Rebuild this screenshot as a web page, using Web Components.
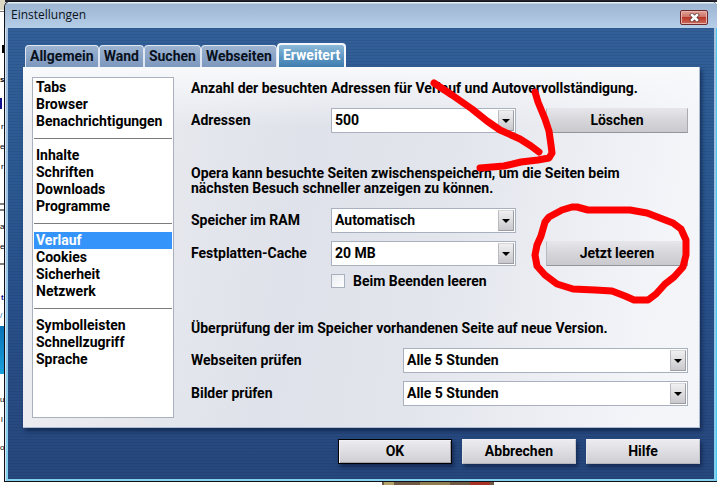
<!DOCTYPE html>
<html lang="de">
<head>
<meta charset="utf-8">
<title>Einstellungen</title>
<style>
    body {
        margin: 0;
        min-height: 100vh;
        position: relative;
        overflow: hidden;
        background: #fff;
        color: #000;
        font: bold 14px/17px Roboto, "Liberation Sans", sans-serif;
    }
</style>
</head>
<body>
<page-backdrop></page-backdrop>

<settings-window caption="Einstellungen">
    <tab-strip tabs="Allgemein,Wand,Suchen,Webseiten,Erweitert" active="Erweitert"></tab-strip>
    <settings-panel>
        <nav-list
            slot="nav"
            active="Verlauf"
            groups="Tabs,Browser,Benachrichtigungen|Inhalte,Schriften,Downloads,Programme|Verlauf,Cookies,Sicherheit,Netzwerk|Symbolleisten,Schnellzugriff,Sprache"
        ></nav-list>

        <settings-group>
            <span slot="text">Anzahl der besuchten Adressen für Verlauf und Autovervollständigung.</span>
            <select-field label="Adressen" value="500">
                <push-button>Löschen</push-button>
            </select-field>
        </settings-group>

        <settings-group>
            <span slot="text">Opera kann besuchte Seiten zwischenspeichern, um die Seiten beim<br>nächsten Besuch schneller anzeigen zu können.</span>
            <select-field label="Speicher im RAM" value="Automatisch"></select-field>
            <select-field label="Festplatten-Cache" value="20 MB">
                <push-button>Jetzt leeren</push-button>
            </select-field>
            <check-field label="Beim Beenden leeren"></check-field>
        </settings-group>

        <settings-group>
            <span slot="text">Überprüfung der im Speicher vorhandenen Seite auf neue Version.</span>
            <select-field wide label="Webseiten prüfen" value="Alle 5 Stunden"></select-field>
            <select-field wide label="Bilder prüfen" value="Alle 5 Stunden"></select-field>
        </settings-group>
    </settings-panel>

    <push-button slot="buttons" kind="default">OK</push-button>
    <push-button slot="buttons" kind="raised">Abbrechen</push-button>
    <push-button slot="buttons" kind="raised">Hilfe</push-button>
</settings-window>

<pen-marks></pen-marks>

<script>
// Sliver of the web page that shows around the window
class PageBackdrop extends HTMLElement {
    constructor() {
        super()
        this.attachShadow({ mode: 'open' })
    }

    connectedCallback() {
        this.shadowRoot.innerHTML = `
        <style>
        :host { position: absolute; inset: 0; z-index: -1; }
        svg { display: block; }
        text { font: 8px "Liberation Sans", sans-serif; }
        .bold { font-weight: bold; }
        </style>

        <svg width="100%" height="100%" aria-hidden="true">
            <defs>
                <linearGradient id="blue" x2="0" y2="1">
                    <stop offset="0" stop-color="#0872b6"/>
                    <stop offset="1" stop-color="#1aa0dc"/>
                </linearGradient>
            </defs>
            <rect width="100%" height="2" fill="#24242c"/>
            <rect width="5" height="10" fill="#dcd8c4"/>
            <rect y="11" width="5" height="1" fill="#77756a"/>
            <rect x="2" y="45" width="2" height="8"/>
            <text class="bold" x="0" y="82">s</text>
            <rect y="98" width="2" height="11" fill="#10108c"/>
            <text x="1" y="129">r</text>
            <text x="0" y="149">e</text>
            <text x="1" y="169">r</text>
            <path d="M0 204h4M0 210h4" stroke="#000"/>
            <text x="0" y="229">a</text>
            <text x="0" y="249">e</text>
            <path d="M0 264h4" stroke="#000"/>
            <text class="bold" x="1" y="300" fill="#10108c">t</text>
            <text x="0" y="318" fill="#0872b6">/</text>
            <rect y="326" width="4" height="48" fill="url(#blue)"/>
            <text x="0" y="402">u</text>
            <text x="1" y="422">l</text>
            <text x="0" y="450">o</text>
            <rect x="382" y="482" width="112" height="3" fill="#6e5a44"/>
            <rect x="384" y="482" width="10" height="3" fill="#b5a268"/>
            <rect x="420" y="482" width="30" height="3" fill="#8f7d52"/>
            <rect x="470" y="482" width="20" height="3" fill="#a53224"/>
        </svg>
        `
    }
}

class SettingsWindow extends HTMLElement {
    constructor() {
        super()
        this.attachShadow({ mode: 'open' })
    }

    connectedCallback() {
        const caption = this.getAttribute('caption')

        this.shadowRoot.innerHTML = `
        <style>
        :host {
            display: block;
            margin-left: 4px;
            padding-top: 1px;
        }
        .frame {
            border: 1px solid #101018;
            border-right: 0;
            border-radius: 6px 6px 0 0;
            background: linear-gradient(#b4c8de, #a3bddb 60px, #9cc4e6 50%, #83d0ef);
            box-shadow: inset 0 1px #e6eef6, inset 1px 0 #d4e4f2, inset -1px 0 #45c8f0;
            padding: 0 3px 2px;
        }
        header {
            display: flex;
            align-items: center;
            justify-content: space-between;
            height: 26px;
            margin: 0 -3px;
            padding: 0 9px 0 6px;
            border-radius: 5px 5px 0 0;
            background: linear-gradient(#e6eef6 1px, #9db6d2 2px, #a8c0dc 50%, #b6cfe8);
        }
        h1 {
            margin: 0;
            font: 12px/24px "Open Sans", "Noto Sans", sans-serif;
            color: #0c1420;
        }
        button {
            display: grid;
            place-items: center;
            width: 28px;
            height: 15px;
            margin-top: 4px;
            padding: 0;
            border: 1px solid #6c2a2c;
            border-radius: 2px;
            background: linear-gradient(#e3a398, #cf7468 45%, #b93a2c 50%, #cf6a5a);
            box-shadow: inset 0 0 0 1px #e8b5ac;
        }
        .body {
            padding: 17px 14px 15px 15px;
            background:
                repeating-linear-gradient(#0a143018 0 1px, transparent 1px 3px),
                linear-gradient(#325f98, #2b5a92 30%, #28508a 60%, #26477c);
        }
        footer {
            display: flex;
            justify-content: flex-end;
            gap: 10px;
            margin-top: 11px;
        }
        ::slotted(push-button) { width: 114px; }
        </style>

        <div class="frame">
            <header>
                <h1>${caption}</h1>
                <button aria-label="Schließen">
                    <svg width="11" height="9" viewBox="0 0 11 9">
                        <path d="M3 2l5 5m0-5l-5 5" stroke="#5d3534" stroke-width="4" stroke-linecap="square"/>
                        <path d="M3 2l5 5m0-5l-5 5" stroke="#fff" stroke-width="2.6" stroke-linecap="square"/>
                    </svg>
                </button>
            </header>
            <div class="body">
                <slot></slot>
                <footer><slot name="buttons"></slot></footer>
            </div>
        </div>
        `
    }
}

class TabStrip extends HTMLElement {
    constructor() {
        super()
        this.attachShadow({ mode: 'open' })
    }

    connectedCallback() {
        const active = this.getAttribute('active')
        const tabs = this.getAttribute('tabs').split(',')

        this.shadowRoot.innerHTML = `
        <style>
        :host { display: block; }
        div {
            display: flex;
            align-items: flex-end;
            height: 24px;
            padding-left: 2px;
            margin-top: -2px;
        }
        button {
            height: 22px;
            padding: 0 4px;
            border: 1px solid #dfe8f2;
            border-width: 1px 1px 0;
            border-radius: 4px 4px 0 0;
            background: linear-gradient(#9db4d0, #8aa5c8 50%, #7d98bd);
            color: #08101c;
            font: inherit;
        }
        button[aria-selected="true"] {
            height: 24px;
            padding: 0 4px 2px;
            border: 2px solid #f4f8fc;
            border-bottom: 0;
            background: linear-gradient(#8fbad8, #5f9ac6 50%, #3f7cae);
            color: #fff;
        }
        </style>

        <div role="tablist">
            ${tabs.map(tab => `<button role="tab" aria-selected="${tab === active}">${tab}</button>`).join('')}
        </div>
        `
    }
}

class SettingsPanel extends HTMLElement {
    constructor() {
        super()
        this.attachShadow({ mode: 'open' })
    }

    connectedCallback() {
        this.shadowRoot.innerHTML = `
        <style>
        :host {
            display: grid;
            grid-template-columns: 142px 1fr;
            gap: 17px;
            padding: 10px 11px 9px 9px;
            border: solid #aebccd;
            border-width: 0 1px 1px 0;
            background:
                linear-gradient(#f8f9fb, #f8f9fb00 60px),
                linear-gradient(100deg, #eeeff2, #dfe2ea 40%, #e2e5ec 60%, #f4f5f9 92%);
            box-shadow: 2px 3px 4px #0a1a3ca0;
        }
        main {
            display: flex;
            flex-direction: column;
            gap: 33px;
            padding-top: 4px;
        }
        </style>

        <slot name="nav"></slot>
        <main><slot></slot></main>
        `
    }
}

class NavList extends HTMLElement {
    constructor() {
        super()
        this.attachShadow({ mode: 'open' })
    }

    connectedCallback() {
        const active = this.getAttribute('active')
        const groups = this.getAttribute('groups').split('|')

        const item = name => `<a href="#" ${name === active ? 'aria-current="page"' : ''}>${name}</a>`

        this.shadowRoot.innerHTML = `
        <style>
        :host {
            display: block;
            box-sizing: border-box;
            min-height: 341px;
            padding: 1px;
            border: 1px solid #a9b1bf;
            background: #fff;
        }
        a {
            display: block;
            padding: 0 2px;
            color: #000;
            text-decoration: none;
        }
        a[aria-current] {
            background: #3594fa;
            color: #fff;
        }
        hr {
            height: 1px;
            margin: 8px 0;
            border: 0;
            background: #7c7c7c;
        }
        </style>

        <nav>${groups.map(group => group.split(',').map(item).join('')).join('<hr>')}</nav>
        `
    }
}

class SettingsGroup extends HTMLElement {
    constructor() {
        super()
        this.attachShadow({ mode: 'open' })
    }

    connectedCallback() {
        this.shadowRoot.innerHTML = `
        <style>
        :host { display: block; }
        p {
            margin: 0 0 12px;
            line-height: 15px;
        }
        div {
            display: flex;
            flex-direction: column;
            gap: 8px;
        }
        </style>

        <p><slot name="text"></slot></p>
        <div><slot></slot></div>
        `
    }
}

class SelectField extends HTMLElement {
    constructor() {
        super()
        this.attachShadow({ mode: 'open' })
    }

    connectedCallback() {
        const label = this.getAttribute('label')
        const value = this.getAttribute('value')

        this.shadowRoot.innerHTML = `
        <style>
        :host {
            display: grid;
            grid-template-columns: 140px 1fr 142px;
            align-items: center;
        }
        :host([wide]) { grid-template-columns: 212px 1fr; }
        .box {
            position: relative;
            margin-right: 30px;
        }
        :host([wide]) .box { margin-right: 0; }
        select {
            display: block;
            box-sizing: border-box;
            width: 100%;
            height: 25px;
            padding: 0 20px 0 3px;
            appearance: none;
            border: 1px solid #a9b1bf;
            border-radius: 0;
            background: #fff;
            color: #000;
            font: inherit;
        }
        /* drop-down arrow over the right end of the select */
        svg {
            position: absolute;
            top: 2px;
            right: 2px;
            box-sizing: border-box;
            border: 1px solid #b9bac0;
            border-color: #d8d8dc #9b9ca4 #9b9ca4 #b9bac0;
            background: linear-gradient(#f0f0f2, #c9c9cd);
            pointer-events: none;
        }
        </style>

        <label for="field">${label}</label>
        <div class="box">
            <select id="field"><option>${value}</option></select>
            <svg width="16" height="21" viewBox="0 0 14 19"><path d="M3 8h8l-4 4z"/></svg>
        </div>
        <slot></slot>
        `
    }
}

class CheckField extends HTMLElement {
    constructor() {
        super()
        this.attachShadow({ mode: 'open' })
    }

    connectedCallback() {
        this.shadowRoot.innerHTML = `
        <style>
        :host {
            display: flex;
            align-items: center;
            gap: 8px;
            padding-left: 140px;
            line-height: 14px;
        }
        input {
            box-sizing: border-box;
            width: 14px;
            height: 14px;
            margin: 0;
            appearance: none;
            border: 1px solid #a9b1bf;
            background: linear-gradient(135deg, #e9ecf1, #fff);
        }
        </style>

        <input type="checkbox" id="check">
        <label for="check">${this.getAttribute('label')}</label>
        `
    }
}

class PushButton extends HTMLElement {
    constructor() {
        super()
        this.attachShadow({ mode: 'open' })
    }

    connectedCallback() {
        this.shadowRoot.innerHTML = `
        <style>
        :host { display: block; }
        button {
            display: block;
            width: 100%;
            height: 25px;
            padding: 0;
            border: 1px solid;
            border-color: #e6e6ea #a9a9b0 #94949c #b9b9c0;
            background: linear-gradient(#e6e6ea, #d6d6da 50%, #cacace);
            color: #000;
            font: inherit;
        }
        :host([kind]) button {
            border-color: #f2f2f5 #c4c4ca #b4b4ba #e6e6ea;
            background: linear-gradient(#ececf0, #dedee2 50%, #cdcdd2);
            box-shadow: 2px 3px 4px #0a1a3ca0;
        }
        :host([kind="default"]) button {
            border-color: #000;
            box-shadow: inset 1px 1px #f2f2f5, inset -1px -1px #a4a4aa, 2px 3px 4px #0a1a3ca0;
        }
        </style>

        <button><slot></slot></button>
        `
    }
}

// Red freehand arrow and circle drawn over the window
class PenMarks extends HTMLElement {
    constructor() {
        super()
        this.attachShadow({ mode: 'open' })
    }

    connectedCallback() {
        this.shadowRoot.innerHTML = `
        <style>
        :host {
            position: absolute;
            top: 0;
            left: 0;
            pointer-events: none;
        }
        svg { display: block; }
        </style>

        <svg width="717" height="485" fill="none" stroke="#f00" stroke-width="7" stroke-linecap="round" stroke-linejoin="round" aria-hidden="true">
            <path d="M434 83L452 95L472 109L487 121L500 130L520 139L531 146L539 152"/>
            <path d="M535 92L538 102L545 119L549 131L551 145L552 153L549 158L538 160L521 162L504 166L480 168"/>
            <path d="M577 207L588 210H630L647 213L660 218L673 223L681 229L686 240V255L683 267L674 277L665 284L656 294L648 300H634L625 296L612 291L595 290L573 289L557 284L545 275L537 266L535 255L537 245L541 236L545 222L549 217L562 210L572 207Z"/>
        </svg>
        `
    }
}

customElements.define('page-backdrop', PageBackdrop)
customElements.define('settings-window', SettingsWindow)
customElements.define('tab-strip', TabStrip)
customElements.define('settings-panel', SettingsPanel)
customElements.define('nav-list', NavList)
customElements.define('settings-group', SettingsGroup)
customElements.define('select-field', SelectField)
customElements.define('check-field', CheckField)
customElements.define('push-button', PushButton)
customElements.define('pen-marks', PenMarks)
</script>
</body>
</html>
